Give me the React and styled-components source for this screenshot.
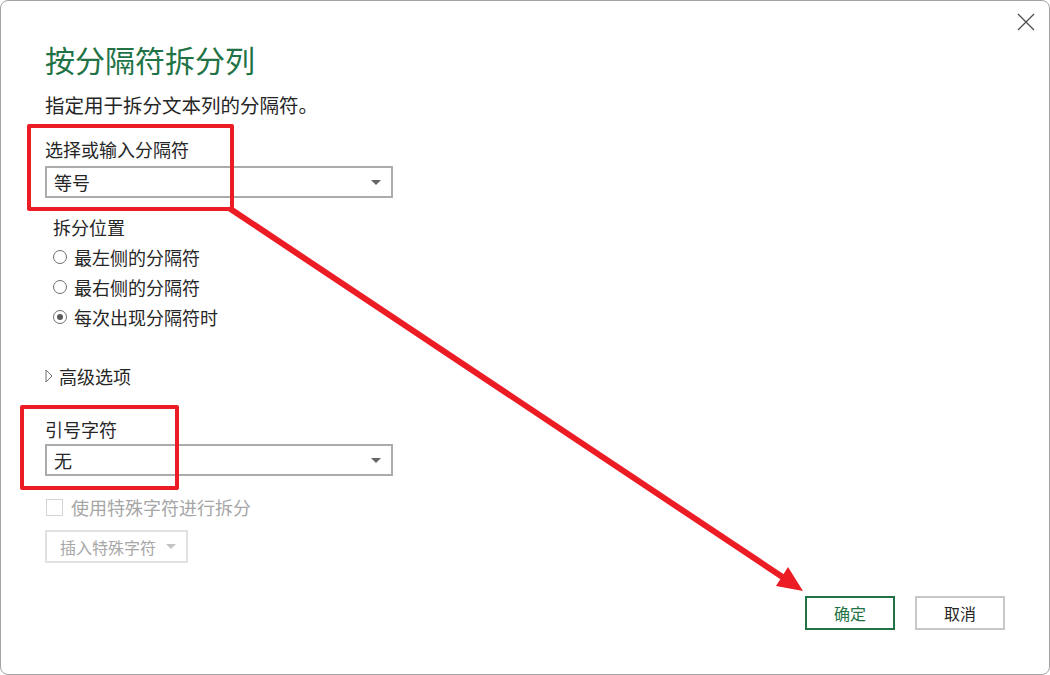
import styled, { createGlobalStyle } from 'styled-components';

const GlobalStyle = createGlobalStyle`
    html, body {
        margin: 0;
        padding: 0;
        background: #ffffff;
    }
    body {
        font-family: "Noto Sans CJK SC", "Noto Sans", sans-serif;
        color: #262626;
    }
`;

const Dialog = styled.div`
    position: relative;
    box-sizing: border-box;
    width: 1050px;
    height: 675px;
    border: 1px solid #a3a3a3;
    border-radius: 8px;
    background: #ffffff;
    padding: 0 44px 0 44px;
    display: flex;
    flex-direction: column;
    overflow: hidden;
`;

const CloseButton = styled.div`
    position: absolute;
    top: 11px;
    right: 14px;
    width: 18px;
    height: 18px;
`;

const Title = styled.h1`
    margin: 38px 0 0;
    font-size: 30px;
    line-height: 40px;
    font-weight: 400;
    color: #217346;
`;

const Subtitle = styled.div`
    margin-top: 13px;
    font-size: 19.5px;
    line-height: 26px;
`;

const Label = styled.div`
    margin-top: ${(props) => props.$top}px;
    margin-left: ${(props) => props.$indent || 0}px;
    font-size: 18px;
    line-height: 24px;
    color: ${(props) => (props.$disabled ? '#a6a6a6' : '#262626')};
`;

const Select = styled.div`
    box-sizing: border-box;
    margin-top: ${(props) => props.$top}px;
    width: 348px;
    height: 32px;
    border: 2px solid #ababab;
    display: flex;
    align-items: center;
    justify-content: space-between;
    padding: 0 10px 0 7px;
    font-size: 18px;
`;

const Caret = styled.span`
    width: 0;
    height: 0;
    border-left: 5px solid transparent;
    border-right: 5px solid transparent;
    border-top: 5px solid ${(props) => props.$color || '#666'};
`;

const RadioGroup = styled.div`
    margin: 3px 0 0 8px;
    display: flex;
    flex-direction: column;
`;

const RadioRow = styled.div`
    height: 30px;
    display: flex;
    align-items: center;
    gap: 7px;
    font-size: 18px;
`;

const RadioCircle = styled.span`
    box-sizing: border-box;
    width: 14px;
    height: 14px;
    border: 1px solid #6f6f6f;
    border-radius: 50%;
    display: flex;
    align-items: center;
    justify-content: center;

    &::after {
        content: '';
        width: 6px;
        height: 6px;
        border-radius: 50%;
        background: ${(props) => (props.$checked ? '#5a5a5a' : 'transparent')};
    }
`;

const Expander = styled.div`
    margin-top: 32px;
    display: flex;
    align-items: center;
    gap: 6px;
    font-size: 18px;
    line-height: 24px;
`;

const CheckRow = styled.div`
    margin-top: 19px;
    display: flex;
    align-items: center;
    gap: 8px;
    font-size: 18px;
    line-height: 24px;
    color: #a6a6a6;
`;

const CheckBox = styled.span`
    box-sizing: border-box;
    margin-left: 1px;
    width: 17px;
    height: 17px;
    border: 1px solid #d4d4d4;
`;

const InsertButton = styled.div`
    box-sizing: border-box;
    margin-top: 11px;
    width: 143px;
    height: 33px;
    border: 2px solid #e1e1e1;
    display: flex;
    align-items: center;
    gap: 10px;
    padding-left: 13px;
    font-size: 16px;
    color: #a6a6a6;
`;

const Footer = styled.div`
    margin-top: 33px;
    display: flex;
    justify-content: flex-end;
    gap: 20px;
`;

const Button = styled.div`
    box-sizing: border-box;
    width: 90px;
    height: 34px;
    display: flex;
    align-items: center;
    justify-content: center;
    font-size: 16px;
    border: 2px solid ${(props) => (props.$primary ? '#217346' : '#c8c8c8')};
    color: ${(props) => (props.$primary ? '#217346' : '#262626')};
`;

const RedFrame = styled.div`
    position: absolute;
    box-sizing: border-box;
    top: ${(props) => props.$y}px;
    left: ${(props) => props.$x}px;
    width: ${(props) => props.$w}px;
    height: ${(props) => props.$h}px;
    border: 4px solid #ec1c24;
    border-radius: 2px;
    pointer-events: none;
`;

const Overlay = styled.svg`
    position: absolute;
    top: -1px;
    left: -1px;
    pointer-events: none;
`;

const radios = [
    { label: '最左侧的分隔符', checked: false },
    { label: '最右侧的分隔符', checked: false },
    { label: '每次出现分隔符时', checked: true },
];

export default function App() {
    return (
        <>
            <GlobalStyle />
            <Dialog>
                <CloseButton>
                    <svg width="18" height="18" viewBox="0 0 18 18">
                        <path d="M1 1 L17 17 M17 1 L1 17" stroke="#4a4a4a" strokeWidth="1.2" fill="none" />
                    </svg>
                </CloseButton>

                <Title>按分隔符拆分列</Title>
                <Subtitle>指定用于拆分文本列的分隔符。</Subtitle>

                <Label $top={19}>选择或输入分隔符</Label>
                <Select $top={5}>
                    等号
                    <Caret />
                </Select>

                <Label $top={17} $indent={8}>拆分位置</Label>
                <RadioGroup>
                    {radios.map((r) => (
                        <RadioRow key={r.label}>
                            <RadioCircle $checked={r.checked} />
                            {r.label}
                        </RadioRow>
                    ))}
                </RadioGroup>

                <Expander>
                    <svg width="8" height="14" viewBox="0 0 8 14">
                        <path d="M1 1 L7 7 L1 13 Z" stroke="#707070" strokeWidth="1" fill="none" />
                    </svg>
                    高级选项
                </Expander>

                <Label $top={29}>引号字符</Label>
                <Select $top={3}>
                    无
                    <Caret />
                </Select>

                <CheckRow>
                    <CheckBox />
                    使用特殊字符进行拆分
                </CheckRow>

                <InsertButton>
                    插入特殊字符
                    <Caret $color="#c4c4c4" />
                </InsertButton>

                <Footer>
                    <Button $primary>确定</Button>
                    <Button>取消</Button>
                </Footer>

                <RedFrame $x={26} $y={123} $w={207} $h={87} />
                <RedFrame $x={19} $y={404} $w={159} $h={85} />

                <Overlay width="1050" height="675" viewBox="0 0 1050 675">
                    <line x1="229" y1="208" x2="784" y2="578" stroke="#ec1c24" strokeWidth="6" />
                    <polygon points="803,591 788,567 776,586" fill="#ec1c24" />
                </Overlay>
            </Dialog>
        </>
    );
}
